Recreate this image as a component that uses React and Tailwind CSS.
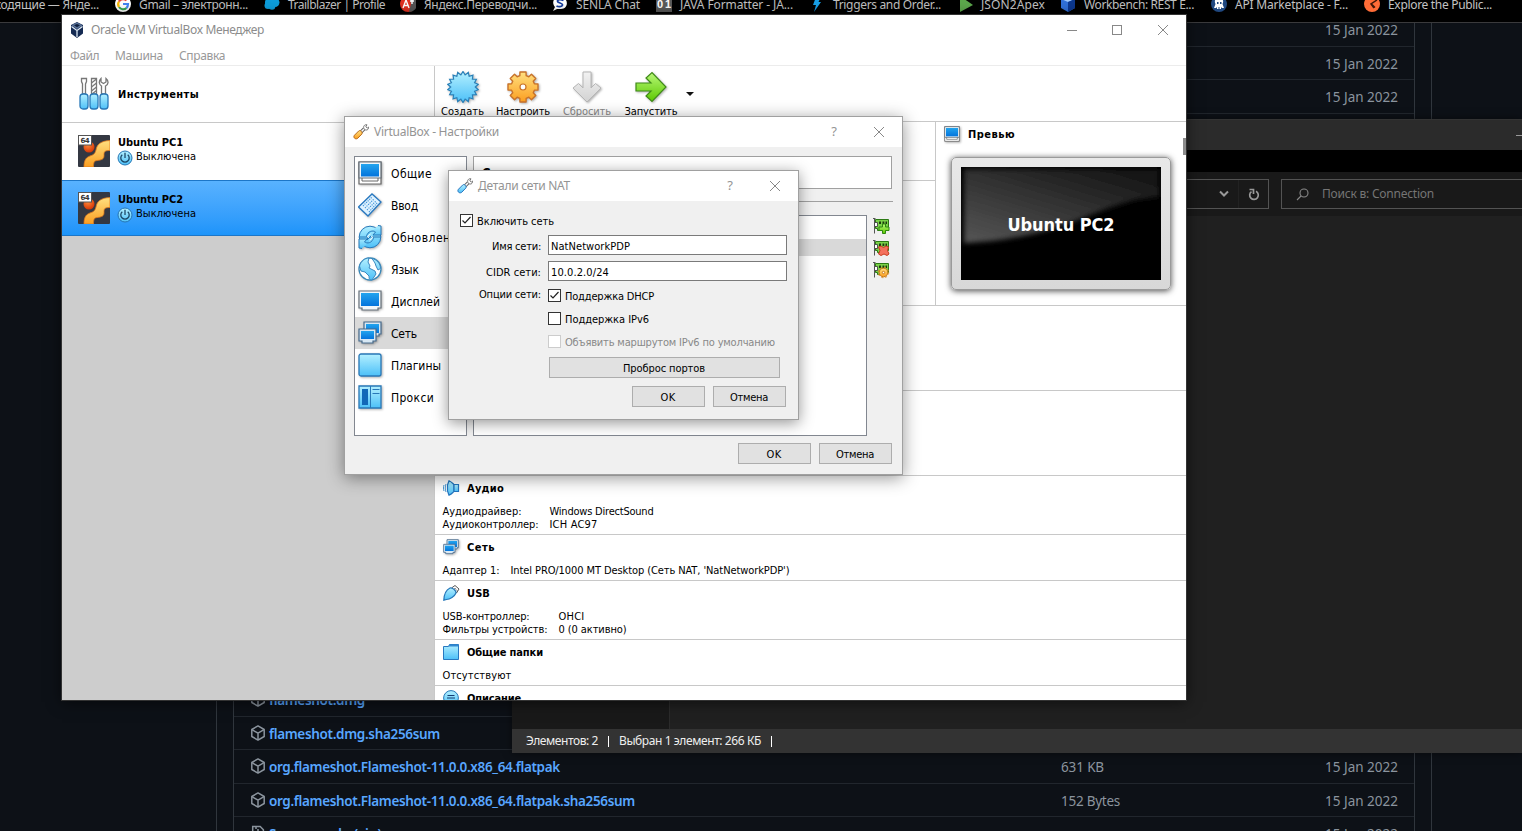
import React, { useLayoutEffect, useRef } from "react";

// Text whose tracking is adjusted so that it takes exactly `w` pixels.
function Fit({ w, className = "", children }) {
  const ref = useRef(null);
  useLayoutEffect(() => {
    const el = ref.current;
    el.style.letterSpacing = "0px";
    const natural = el.getBoundingClientRect().width;
    el.style.letterSpacing = (w - natural) / String(children).length + "px";
  }, [w, children]);
  return (
    <span ref={ref} className={"inline-block shrink-0 whitespace-pre " + className}>
      {children}
    </span>
  );
}

/* ---------- icons ---------- */

function Defs() {
  return (
    <svg className="absolute h-0 w-0" aria-hidden="true">
      <defs>
        <linearGradient id="cy" x1="0" y1="0" x2="0" y2="1">
          <stop offset="0" stopColor="#b4f0ff" />
          <stop offset="1" stopColor="#4cc0f8" />
        </linearGradient>
        <linearGradient id="bl" x1="0" y1="0" x2="0" y2="1">
          <stop offset="0" stopColor="#22a4ee" />
          <stop offset="1" stopColor="#0474dc" />
        </linearGradient>
        <linearGradient id="or" x1="0" y1="0" x2="0" y2="1">
          <stop offset="0" stopColor="#ffe080" />
          <stop offset="1" stopColor="#fb9e20" />
        </linearGradient>
        <linearGradient id="gr" x1="0" y1="0" x2="0" y2="1">
          <stop offset="0" stopColor="#b8f878" />
          <stop offset="1" stopColor="#5cc800" />
        </linearGradient>
        <linearGradient id="gy" x1="0" y1="0" x2="0" y2="1">
          <stop offset="0" stopColor="#f2f2f2" />
          <stop offset="1" stopColor="#d2d2d2" />
        </linearGradient>
        <radialGradient id="ball" cx="0.4" cy="0.3" r="0.8">
          <stop offset="0" stopColor="#ff8a3a" />
          <stop offset="1" stopColor="#d02c00" />
        </radialGradient>
      </defs>
    </svg>
  );
}

function star(n, cx, cy, r1, r2) {
  const pts = [];
  for (let i = 0; i < n * 2; i++) {
    const a = (Math.PI * i) / n - Math.PI / 2;
    const r = i % 2 ? r2 : r1;
    pts.push((cx + r * Math.cos(a)).toFixed(2) + "," + (cy + r * Math.sin(a)).toFixed(2));
  }
  return pts.join(" ");
}

function gear(cx, cy, r1, r2) {
  const pts = [];
  for (let i = 0; i < 8; i++) {
    const a = (Math.PI * i) / 4 - Math.PI / 2;
    [[-0.27, r2], [-0.2, r1], [0.2, r1], [0.27, r2]].forEach(([d, r]) =>
      pts.push((cx + r * Math.cos(a + d)).toFixed(2) + "," + (cy + r * Math.sin(a + d)).toFixed(2))
    );
  }
  return pts.join(" ");
}

const STAR = star(18, 16, 16, 15.5, 12.3);
const GEAR = gear(16, 16, 15.3, 11.8);

const shadow = "drop-shadow-[1px_1px_1px_rgba(0,0,0,0.3)]";

const NewIcon = () => (
  <svg width="32" height="32" className={shadow}>
    <polygon points={STAR} fill="url(#cy)" stroke="#2a80b8" strokeWidth="1.2" />
  </svg>
);
const GearIcon = () => (
  <svg width="32" height="32" className={shadow}>
    <polygon points={GEAR} fill="url(#or)" stroke="#c8722a" strokeWidth="1.4" strokeLinejoin="round" />
    <circle cx="16" cy="16" r="3" fill="#fff" stroke="#c8722a" strokeWidth="1.2" />
  </svg>
);
const DropIcon = () => (
  <svg width="32" height="32" className={shadow}>
    <path d="M12 1h8v16l4.500-4.500 5.500 4.500-14 14L2 17l5.500-4.500L12 17z" fill="url(#gy)" stroke="#b6b6b6" />
  </svg>
);
const StartIcon = () => (
  <svg width="32" height="32" className={shadow}>
    <path d="M1 12h15l-5-5 6-5.500L31 16 17 30.500 11 25l5-5H1z" fill="url(#gr)" stroke="#3f8a18" strokeWidth="1.2" />
  </svg>
);
const ToolsIcon = () => (
  <svg width="32" height="34" fill="none" stroke="#777" strokeWidth="1.300">
    <path d="M2.500 1.500h5v3L6.500 7v10h-3V7l-1-2.500z" fill="#fff" />
    <path d="M12.500 1.500h5V17h-5z" fill="#fff" />
    <path d="M12.500 6l5-4M12.500 10l5-4M12.500 14l5-4M13 17l4.500-3.500" />
    <path d="M22 1.500c-3 3-1.500 6.500.5 7.500v8h4V9c3-1.500 3.500-5 .5-7.500V5l-2.500 1.500L22 5z" fill="#fff" />
    <g fill="url(#cy)" stroke="#2878b8">
      <rect x="1" y="17" width="8" height="15" rx="3" />
      <rect x="11" y="17" width="8" height="15" rx="3" />
      <rect x="21" y="17" width="8" height="15" rx="3" />
    </g>
  </svg>
);
const VmIcon = () => (
  <svg width="32" height="32">
    <rect width="32" height="32" rx="1" fill="#343842" />
    <circle cx="11" cy="12" r="5.500" fill="url(#ball)" />
    <path d="M32 5.500v10c-6 0-6 1.500-6 5s-2 4.500-7 5c-3 .5-3.500 2-3.500 6.500H6c0-6 1.500-9.500 6-11 3-1 5-2 6-6 1-6 5-9 14-9.500z" fill="url(#or)" stroke="#e0781c" strokeWidth=".8" />
    <rect x=".5" y=".5" width="13" height="9.500" fill="#fff" stroke="#555" />
    <text x="2.500" y="8" fontSize="7" fontFamily="DejaVu Sans" fontWeight="bold" textLength="9" fill="#333">64</text>
  </svg>
);
const PowerIcon = () => (
  <svg width="16" height="16" fill="none">
    <circle cx="8" cy="8" r="7" fill="url(#cy)" stroke="#2676b4" />
    <path d="M5.300 4.700a4.200 4.200 0 1 0 5.400 0M8 2.800V8" stroke="#1c4868" strokeWidth="1.300" />
  </svg>
);
const VBoxIcon = () => (
  <svg width="14" height="16">
    <path d="M7 0l6 3v8.500L7 16l-6-4.500V3z" fill="#152a52" />
    <path d="M7 .5l5.500 2.700L7 7 1.500 3.200z" fill="#5a7298" />
    <path d="M1.500 4.500L7 8.500v6.500M12.500 4.500L7 8.500" stroke="#dce8f4" strokeWidth="1.300" fill="none" />
    <path d="M4 3.300L7 2l3 1.300L7 5.300z" fill="#0e1e3c" />
  </svg>
);
const WrenchIcon = ({ c, s }) => (
  <svg width="16" height="16" fill="none">
    <path d="M7.500 8.500L11 5" stroke="#666" strokeWidth="3.400" />
    <path d="M7.500 8.500L11 5" stroke="#fff" strokeWidth="1.500" />
    <path d="M11.300 5.300C9.500 2.500 11.500.3 14 .8L12.800 2.800l1.500 1.200L15.600 3c.3 2.500-2 4-4.300 2.300z" fill="#fff" stroke="#666" strokeWidth=".9" />
    <path d="M1.500 11.200l4.300-4.300c1.600-1.200 4.200 1.500 3 3.200L4.600 14.400c-2.300 1.500-4.900-1.200-3.100-3.200z" fill={c} stroke={s} />
  </svg>
);

const Monitor = ({ small, base }) => (
  <svg width={small ? 16 : 24} height={small ? 16 : 24} viewBox="0 0 24 24" className={shadow}>
    {base && <path d="M1 1h22v22H1z" fill="#fff" stroke="#666" strokeWidth="1.2" />}
    <path d={base ? "M1 1h22v16H1z" : "M1 2h22v17h-3v2H4v-2H1z"} fill="#f0f6fa" stroke="#66707a" strokeWidth="1.2" />
    <path d={base ? "M3 3h18v12.500H3z" : "M3 4h18v13H3z"} fill="url(#bl)" />
    {base && <path d="M4 17v3h16v-3" stroke="#666" fill="none" />}
  </svg>
);
const KeyIcon = () => (
  <svg width="24" height="24" className={shadow}>
    <path d="M0.500 14L14 1l9 8-13 14z" fill="#dff2ff" stroke="#2878c0" strokeWidth="1.300" />
    <path d="M5 13l9-9M7 15l9-9M9 17l9-9M11 19l8-9" stroke="#4898d8" strokeDasharray="1.200 1" strokeWidth="1.200" />
  </svg>
);
const UpdateIcon = () => (
  <svg width="24" height="24" className={shadow}>
    <circle cx="12" cy="12" r="10.800" fill="url(#cy)" stroke="#2878b8" />
    <path d="M20 0.500l3 .5v9h-8l2.500-3C15 5 9.500 6 8.500 11.500" fill="url(#cy)" stroke="#2878b8" />
    <path d="M4 23.500L1 23v-9h8l-2.500 3C9 19 14.500 18 15.500 12.500" fill="url(#cy)" stroke="#2878b8" />
    <path d="M1 12h9l-1 3 4-4-1 1h11" stroke="#2878b8" fill="none" />
    <path d="M10.500 13l-1-2 3-2M13.500 11l1 2-3 2" stroke="#fff" fill="none" />
  </svg>
);
const GlobeIcon = () => (
  <svg width="24" height="24" className={shadow}>
    <circle cx="12" cy="12" r="11" fill="#fff" stroke="#3a88b8" strokeWidth="1.300" />
    <path d="M1.500 9C3 4 7 1 11 1l-1 4 2 4-1 2 6 3 1 3-4 6c-3 0-3-2-3-4l-4-4-4-1zM14 1.500c5 1 8.500 5.500 8.500 10L20 13l-2-4-1-3z" fill="url(#cy)" stroke="#3a88c0" />
  </svg>
);
const NetIcon = ({ small }) => (
  <svg width={small ? 16 : 24} height={small ? 16 : 24} viewBox="0 0 24 24" className={shadow}>
    <path d="M6 1h17v12h-2v2H6z" fill="#d8e8f4" stroke="#466a8c" strokeWidth="1.200" />
    <path d="M8 3h13v9H8z" fill="url(#bl)" />
    <path d="M1 8h17v12h-3v2H4v-2H1z" fill="#d8e8f4" stroke="#466a8c" strokeWidth="1.200" />
    <path d="M3 10h13v8H3z" fill="url(#bl)" />
  </svg>
);
const PluginIcon = () => (
  <svg width="24" height="24" className={shadow}>
    <rect x="1" y="1" width="22" height="22" rx="2" fill="url(#cy)" stroke="#2878b8" strokeWidth="1.300" />
  </svg>
);
const ProxyIcon = () => (
  <svg width="24" height="24" className={shadow}>
    <path d="M1 1h22v22H1z" fill="url(#cy)" stroke="#2878b8" strokeWidth="1.300" />
    <path d="M12.500 1v22M14.500 4.500h7M14.500 8.500h7" stroke="#2878b8" />
    <path d="M4 4h6v16H4z" fill="#1268b8" />
  </svg>
);
const AudioIcon = () => (
  <svg width="17" height="16" fill="none">
    <path d="M4.500 5L6 .8C9 2 10 4 11 4.500v7C10 12 9 14 6 15.200L4.500 11z" fill="url(#cy)" stroke="#2476c0" strokeWidth="1.200" />
    <path d="M11 4.500h4.500v7H11z" fill="url(#cy)" stroke="#2476c0" strokeWidth="1.200" />
    <path d="M3 4c-1 2-1 6 0 8M1 5c-.8 2-.8 4 0 6" stroke="#4494d0" />
  </svg>
);
const UsbIcon = () => (
  <svg width="17" height="16">
    <path d="M8.500 3L12 .5l4 3.500-2.500 4z" fill="#fff" stroke="#555" />
    <path d="M11.500 3l1 1M13 4.500l1 1" stroke="#333" />
    <path d="M.8 15.200C1 9 4 4.500 7 3c2-.8 6.500 2.500 6 5-1.500 3.500-6 6.500-9.500 6.500z" fill="url(#cy)" stroke="#2476b8" strokeWidth="1.200" />
  </svg>
);
const FolderIcon = () => (
  <svg width="17" height="16">
    <path d="M.5 2.500h5l1-2h9v15H.5z" fill="url(#cy)" stroke="#2878c0" />
    <path d="M5.500 2.500l1-2h9v2z" fill="#3088d0" />
  </svg>
);
const DescIcon = () => (
  <svg width="17" height="16">
    <circle cx="8" cy="8" r="7.400" fill="url(#cy)" stroke="#2878b8" />
    <path d="M4.500 5.500h7M4 8h8M4.500 10.500h7" stroke="#173c70" strokeWidth="1.100" />
  </svg>
);
const NicIcon = ({ kind }) => (
  <svg width="17" height="17">
    <path d="M0 .5h2.500M1.500 1v14.500" stroke="#555" fill="none" />
    <path d="M2.500 1.500h13v9h-3v2h-8v-2h-2z" fill="#7ad048" stroke="#2c7a14" />
    <path d="M6 3.500h2v2.500H6zM9.500 3.500h1.800v2.500H9.500zM12.500 3.500h1.500v2.500h-1.500z" fill="#1c3810" />
    <path d="M1.500 4.500h3v4h-3z" fill="#fff" stroke="#444" strokeWidth=".9" />
    {kind === "add" && <path d="M9.500 6h3v3H16v3.500h-3.500v3h-3v-3H6V9h3.500z" fill="url(#gr)" stroke="#2f8810" />}
    {kind === "del" && <path d="M5.500 7L8 6l2.500 1.500L13 6l2.500 1L14.500 10.500 16 14l-2 1.500-3-1.500-3 1.500-2.500-1.500L7 10.500z" fill="#f4705c" stroke="#c83c20" />}
    {kind === "edit" && (
      <>
        <circle cx="10.500" cy="10.500" r="4.300" fill="url(#or)" stroke="#c87818" />
        <circle cx="10.500" cy="10.500" r="5.200" fill="none" stroke="#d88820" strokeDasharray="2 2.080" />
        <circle cx="10.500" cy="10.500" r="1.200" fill="#fff" stroke="#c87818" />
      </>
    )}
  </svg>
);
const Cross = ({ c = "#888" }) => (
  <svg width="12" height="12" stroke={c} fill="none">
    <path d="M1 1l10 10M11 1L1 11" />
  </svg>
);
const PackageIcon = () => (
  <svg width="16" height="16" viewBox="0 0 16 16" fill="none" stroke="#8b949e" strokeWidth="1.500" strokeLinejoin="round" className="-translate-y-px">
    <path d="M8 .9l6.200 3.600v7L8 15.100l-6.200-3.600v-7z" />
    <path d="M2 4.700l6 3.500 6-3.500M8 8.200V15" />
  </svg>
);
const ZipIcon = () => (
  <svg width="16" height="16" fill="none" stroke="#8b949e" strokeWidth="1.500" className="-translate-y-px">
    <path d="M2.700 1.500h7.500l3.200 3.200v10H2.700zM6 2v2M8 4v2M6 6v2" />
  </svg>
);

/* ---------- browser behind the windows ---------- */

const fav = {
  google: (
    <svg width="16" height="16" fill="none">
      <circle cx="8" cy="8" r="8" fill="#fff" />
      <path d="M4 11a5 5 0 0 0 7.500 1" stroke="#34a853" strokeWidth="2.200" />
      <path d="M4 5.500a5 5 0 0 0 0 5.500" stroke="#fbbc05" strokeWidth="2.200" />
      <path d="M11.500 4.500A5 5 0 0 0 4 5.500" stroke="#ea4335" strokeWidth="2.200" />
      <path d="M8 8h5c0 2-.5 3-1.500 4" stroke="#4285f4" strokeWidth="2.200" />
    </svg>
  ),
  cloud: (
    <svg width="16" height="16" fill="#0d9ddb">
      <circle cx="5" cy="6.500" r="4" /><circle cx="11" cy="6.500" r="4.500" /><circle cx="4" cy="9.500" r="3.500" /><circle cx="8" cy="10.500" r="3.300" />
    </svg>
  ),
  translate: (
    <svg width="16" height="16">
      <circle cx="8" cy="8" r="8" fill="#e03020" />
      <path d="M9 0a8 8 0 0 1 0 16l2-8z" fill="#555" />
      <path d="M3 12l3-8 3 8M4 9.500h4M10 5h4M12 4v4" stroke="#fff" strokeWidth="1.400" fill="none" />
    </svg>
  ),
  senla: (
    <svg width="16" height="16">
      <path d="M8 1c9 0 9 12 1 12H5l-4 2 2-4C-1 6 2 1 8 1z" fill="#fff" />
      <path d="M11.500 4.500c-3-1.500-6-1-6 .8S11 7 10.500 9s-4 2-6 1" stroke="#163c9c" strokeWidth="1.800" fill="none" />
    </svg>
  ),
  java: (
    <span className="flex h-4 w-4 justify-around bg-[#5a5a5a] font-['Liberation_Sans'] text-[11px] leading-4 font-bold text-white"><span>0</span><span>1</span></span>
  ),
  bolt: (
    <svg width="16" height="16">
      <path d="M7 1h5L9.500 6H12l-7 10 2-7H4z" fill="#18a0e8" />
    </svg>
  ),
  play: (
    <svg width="16" height="16">
      <path d="M3 0v16l13-7z" fill="#5ca84c" />
    </svg>
  ),
  cube: (
    <svg width="16" height="16">
      <path d="M1 3l8-3 6 3v9l-7 4-7-4z" fill="#3070d8" />
      <path d="M1 3l7 3 7-3-6-3z" fill="#a0c8f8" /><path d="M8 6l7-3v9l-7 4z" fill="#0c3890" />
    </svg>
  ),
  astro: (
    <svg width="16" height="16">
      <circle cx="8" cy="8" r="8" fill="#204880" />
      <path d="M8 2c4 0 5 3 3.500 6l1.500 4h-2l-1-1v2H8.500v-2h-1v2H6v-2l-1 1H3l1.500-4C3 5 4 2 8 2z" fill="#fff" />
      <path d="M6 6h1.500v2H6zM9 6h1.500v2H9z" fill="#204880" />
    </svg>
  ),
  postman: (
    <svg width="16" height="16">
      <circle cx="8" cy="8" r="8" fill="#ff6c37" />
      <path d="M13 4L7 8l3 4M8 8.500l3 3" stroke="#401808" strokeWidth="1.500" fill="none" />
    </svg>
  ),
};

const bookmarks = [
  ["google", "Gmail – электронн...", 109, "w-[149px]"],
  ["cloud", "Trailblazer | Profile", 97, "w-[136px]"],
  ["translate", "Яндекс.Переводчи...", 113, "w-[152px]"],
  ["senla", "SENLA Chat", 64, "w-[104px]"],
  ["java", "JAVA Formatter - JA...", 113, "w-[153px]"],
  ["bolt", "Triggers and Order...", 108, "w-[148px]"],
  ["play", "JSON2Apex", 64, "w-[103px]"],
  ["cube", "Workbench: REST E...", 110, "w-[151px]"],
  ["astro", "API Marketplace - F...", 113, "w-[153px]"],
  ["postman", "Explore the Public...", 104, "w-[140px]"],
];

function BookmarksBar() {
  return (
    <div className="h-[23px] shrink-0 overflow-hidden border-b border-[#3a3a3c] bg-black">
      <div className="-mt-1 flex h-4 items-center text-[12px] leading-4 text-[#c2c2c2]">
        <div className="flex w-[115px] shrink-0 justify-end pr-4">
          <Fit w={104} className="translate-y-px">ходящие — Янде...</Fit>
        </div>
        {bookmarks.map(([icon, label, w, box]) => (
          <div key={label} className={"flex shrink-0 items-center gap-2 " + box}>
            {fav[icon]}
            <Fit w={w} className="translate-y-px">{label}</Fit>
          </div>
        ))}
      </div>
    </div>
  );
}

function Asset({ icon, name, nameW, size, sizeW }) {
  return (
    <div className="flex h-[33.5px] shrink-0 items-center border-b border-[#21262d] pt-[2px] pr-4 pl-4 text-[13.5px] text-[#8b949e]">
      <div className="flex w-[811px] shrink-0 items-center gap-[3px] font-semibold text-[#58a6ff]">
        {icon}
        {name && <Fit w={nameW}>{name}</Fit>}
      </div>
      {size && <Fit w={sizeW}>{size}</Fit>}
      <div className="ml-auto">
        <Fit w={73}>15 Jan 2022</Fit>
      </div>
    </div>
  );
}

function ReleasePage() {
  return (
    <div className="h-[808px] overflow-hidden bg-[#0d1117] pl-[216px]">
      <div className="flex h-full w-[1216px] items-start border-x border-[#30363d] px-4">
        <div className="-mt-[10px] flex h-[860px] w-[1182px] flex-col border-x border-[#30363d]">
          <Asset />
          <Asset />
          <Asset />
          <div className="h-[569.5px] shrink-0" />
          <Asset icon={<PackageIcon />} name="flameshot.dmg" nameW={96} />
          <Asset icon={<PackageIcon />} name="flameshot.dmg.sha256sum" nameW={171} />
          <Asset icon={<PackageIcon />} name="org.flameshot.Flameshot-11.0.0.x86_64.flatpak" nameW={291} size="631 KB" sizeW={43} />
          <Asset icon={<PackageIcon />} name="org.flameshot.Flameshot-11.0.0.x86_64.flatpak.sha256sum" nameW={366} size="152 Bytes" sizeW={59} />
          <Asset icon={<ZipIcon />} name="Source code (zip)" nameW={113} />
        </div>
      </div>
    </div>
  );
}

/* ---------- file explorer ---------- */

function Explorer() {
  return (
    <div className="absolute top-[119px] left-[512px] flex h-[634px] w-[1010px] flex-col overflow-hidden bg-[#202020] text-[12px] shadow-[0_0_8px_rgba(0,0,0,0.5)]">
      <div className="flex h-[31px] shrink-0 items-center justify-end border-t border-[#333] bg-[#2b2b2b]">
        <div className="h-px w-[6px] bg-[#999]" />
      </div>
      <div className="h-[22px] shrink-0 bg-black" />
      <div className="flex h-[44px] shrink-0 items-center justify-end gap-3 bg-[#191919]">
        <div className="flex h-[30px] w-[600px] items-center justify-end border border-[#535353]">
          <svg width="12" height="8" fill="none" stroke="#999" strokeWidth="2"><path d="M2 1.500l4 4 4-4" /></svg>
          <div className="ml-[8px] h-full w-px bg-[#222]" />
          <svg width="12" height="13" className="mr-[8px] ml-[9px]" fill="none" stroke="#999" strokeWidth="1.700">
            <path d="M8 3.300a4.300 4.300 0 1 1-4.500.3M1.500 1.500h4v4.500" />
          </svg>
        </div>
        <div className="flex h-[30px] w-[241px] items-center border-y border-l border-[#535353] pl-[14px] text-[12px] text-[#757575]">
          <svg width="13" height="13" fill="none" stroke="#888" strokeWidth="1.100">
            <circle cx="8" cy="5" r="4" /><path d="M5 8L1 12" />
          </svg>
          <div className="ml-[13px]"><Fit w={112}>Поиск в: Connection</Fit></div>
        </div>
      </div>
      <div className="flex min-h-0 flex-1">
        <div className="w-[158px] border-r border-[#2b2b2b] bg-[#191919]" />
      </div>
      <div className="flex h-6 shrink-0 items-center bg-[#333] pl-[14px] text-[12px] text-[#eee]">
        <Fit w={72}>Элементов: 2</Fit>
        <div className="mr-[10px] ml-[10px] h-[11px] w-px bg-white" />
        <Fit w={142}>Выбран 1 элемент: 266 КБ</Fit>
        <div className="ml-[10px] h-[11px] w-px bg-white" />
      </div>
    </div>
  );
}

/* ---------- VirtualBox manager ---------- */

const tahoma = "font-['DejaVu_Sans_Condensed','DejaVu_Sans',sans-serif]";
const tahomaBold = "font-['DejaVu_Sans_Condensed','DejaVu_Sans',sans-serif] font-bold";

function Machine({ name, selected }) {
  return (
    <div
      className={
        "flex shrink-0 items-start border-y pt-[11px] pl-4 " +
        (selected ? "h-[56px] border-[#1c76c8] bg-linear-to-b from-[#58b2ff] to-[#1c94fa]" : "h-[57px] border-transparent bg-white")
      }
    >
      <VmIcon />
      <div className={"ml-2 flex flex-col items-start text-[11px] text-black " + tahoma}>
        <Fit w={65} className="leading-[15px] font-bold">{name}</Fit>
        <div className="-ml-px flex h-[15px] items-center gap-[3px]">
          <PowerIcon />
          <Fit w={60}>Выключена</Fit>
        </div>
      </div>
    </div>
  );
}

function ToolButton({ icon, label, w, box, muted }) {
  return (
    <div className={"flex shrink-0 flex-col items-center " + box}>
      {icon}
      <Fit w={w} className={"mt-[2px] text-[11px] leading-[14px] " + (muted ? "text-[#888]" : "text-black")}>{label}</Fit>
    </div>
  );
}

function Section({ icon, title, titleW, rows, labelBox }) {
  return (
    <div className="shrink-0 border-b border-[#c8c8c8] pb-[3px] pl-[7.5px]">
      <div className={"flex h-6 items-center text-[11px] " + tahomaBold}>
        <div className="w-[24.5px]">{icon}</div>
        <Fit w={titleW} className="translate-y-px">{title}</Fit>
      </div>
      <div className="pt-[5px] text-[11px] leading-[13px]">
        {rows.map(([a, aw, b, bw]) => (
          <div key={a} className="flex h-[13px]">
            <div className={labelBox}><Fit w={aw}>{a}</Fit></div>
            {b && <Fit w={bw}>{b}</Fit>}
          </div>
        ))}
      </div>
    </div>
  );
}

function Preview() {
  return (
    <div className="w-[251px] shrink-0 border-l border-[#c8c8c8] pl-[7px]">
      <div className={"flex h-6 items-center gap-2 pl-px text-[11px] " + tahomaBold}>
        <Monitor small base />
        <Fit w={47} className="translate-y-px">Превью</Fit>
      </div>
      <div className="mt-[11px] ml-2 h-[133px] w-[220px] rounded-[5px] border border-[#9a9a9a] bg-linear-to-b from-[#e8e8e8] to-[#d8d8d8] p-[9px] shadow-[0_1px_6px_rgba(0,0,0,0.7)]">
        <div className="grid h-[113px] w-[200px] place-items-center overflow-hidden bg-black">
          <svg width="200" height="113" className="col-start-1 row-start-1">
            <defs>
              <linearGradient id="gl" x1="0.8" y1="0" x2="0" y2="1">
                <stop offset="0" stopColor="#161616" />
                <stop offset="1" stopColor="#565656" />
              </linearGradient>
              <filter id="soft"><feGaussianBlur stdDeviation="2.500" /></filter>
            </defs>
            <path d="M3 2H198V30C140 32 110 72 3 76z" fill="url(#gl)" filter="url(#soft)" />
          </svg>
          <div className="col-start-1 row-start-1 translate-y-px text-[18px] font-bold text-white">
            <Fit w={107}>Ubuntu PC2</Fit>
          </div>
        </div>
      </div>
    </div>
  );
}

function Manager() {
  return (
    <div className="absolute top-[15px] left-[62px] flex h-[685px] w-[1124px] flex-col overflow-hidden bg-white shadow-[0_0_0_1px_#333,0_2px_14px_rgba(0,0,0,0.6)]">
      <div className="flex h-[30px] shrink-0 items-center pr-[17px] pl-2 text-[12px] text-[#8c8c8c]">
        <VBoxIcon />
        <div className="ml-[7px]"><Fit w={173}>Oracle VM VirtualBox Менеджер</Fit></div>
        <div className="ml-auto flex items-center">
          <div className="mr-[35px] h-px w-[10px] bg-[#888]" />
          <div className="mr-[35px] h-[10px] w-[10px] border border-[#888]" />
          <Cross />
        </div>
      </div>
      <div className="flex h-[21px] shrink-0 items-center gap-4 border-b border-[#ececec] pt-[2px] pl-2 text-[12px] text-[#999]">
        <Fit w={29}>Файл</Fit>
        <Fit w={48}>Машина</Fit>
        <Fit w={46}>Справка</Fit>
      </div>
      <div className={"flex min-h-0 flex-1 " + tahoma}>
        <div className="flex w-[373px] shrink-0 flex-col border-r border-[#c8c8c8] bg-[#cdcdcd]">
          <div className="flex h-[57px] shrink-0 items-center gap-[7px] border-b border-[#c8c8c8] bg-white pl-[17px] text-[11px] font-bold">
            <ToolsIcon />
            <Fit w={81} className="translate-y-px">Инструменты</Fit>
          </div>
          <Machine name="Ubuntu PC1" />
          <Machine name="Ubuntu PC2" selected />
        </div>
        <div className="flex min-w-0 flex-1 flex-col">
          <div className="flex h-[56px] shrink-0 border-b border-[#c8c8c8] pt-[5px]">
            <ToolButton icon={<NewIcon />} label="Создать" w={43} box="w-[55px]" />
            <ToolButton icon={<GearIcon />} label="Настроить" w={54} box="w-[66px]" />
            <ToolButton icon={<DropIcon />} label="Сбросить" w={48} box="w-[62px]" muted />
            <ToolButton icon={<StartIcon />} label="Запустить" w={53} box="w-[66px]" />
            <svg width="8" height="5" className="mt-[21px] ml-[2px]"><path d="M0 0h8L4 4z" fill="#111" /></svg>
          </div>
          <div className="flex h-[184px] shrink-0 border-b border-[#c8c8c8]">
            <div className="flex-1">
              <div className="h-[59px] border-b border-[#c8c8c8]" />
            </div>
            <Preview />
          </div>
          <div className="h-[85px] shrink-0 border-b border-[#c8c8c8]" />
          <div className="h-[85px] shrink-0 border-b border-[#c8c8c8]" />
          <Section icon={<AudioIcon />} title="Аудио" titleW={37} labelBox="w-[107px]" rows={[["Аудиодрайвер:", 79, "Windows DirectSound", 104], ["Аудиоконтроллер:", 96, "ICH AC97", 48]]} />
          <Section icon={<NetIcon small />} title="Сеть" titleW={28} labelBox="w-[68px]" rows={[["Адаптер 1:", 57, "Intel PRO/1000 MT Desktop (Сеть NAT, 'NatNetworkPDP')", 279]]} />
          <Section icon={<UsbIcon />} title="USB" titleW={23} labelBox="w-[116px]" rows={[["USB-контроллер:", 87, "OHCI", 26], ["Фильтры устройств:", 105, "0 (0 активно)", 68]]} />
          <Section icon={<FolderIcon />} title="Общие папки" titleW={76} labelBox="w-[107px]" rows={[["Отсутствуют", 69]]} />
          <Section icon={<DescIcon />} title="Описание" titleW={54} labelBox="w-[107px]" rows={[]} />
        </div>
      </div>
      <div className="absolute top-[123px] right-0 h-[17px] w-[3px] bg-[#8c8c8c]" />
    </div>
  );
}

/* ---------- dialogs ---------- */

function DialogTitle({ icon, title, w }) {
  return (
    <div className="flex h-[30px] shrink-0 items-center bg-white pr-[17px] pl-2 text-[12px] text-[#949494]">
      {icon}
      <div className="ml-[5px]"><Fit w={w}>{title}</Fit></div>
      <div className="mr-[36px] ml-auto text-[13px]">?</div>
      <Cross />
    </div>
  );
}

function Button({ children, w, box }) {
  return (
    <div className={"flex h-[21px] shrink-0 items-center justify-center border border-[#adadad] bg-[#e1e1e1] pt-[2px] pr-px text-[11px] leading-[13px] " + tahoma + " " + box}>
      <Fit w={w}>{children}</Fit>
    </div>
  );
}

const categories = [
  [<Monitor base />, "Общие", 41],
  [<KeyIcon />, "Ввод", 27],
  [<UpdateIcon />, "Обновления", 74],
  [<GlobeIcon />, "Язык", 28],
  [<Monitor />, "Дисплей", 49],
  [<NetIcon />, "Сеть", 26],
  [<PluginIcon />, "Плагины", 50],
  [<ProxyIcon />, "Прокси", 43],
];

function SettingsDialog() {
  return (
    <div className="absolute top-[116px] left-[344px] flex h-[359px] w-[559px] flex-col border border-[#a0a0a0] bg-[#f0f0f0] shadow-[0_3px_16px_rgba(0,0,0,0.42)]">
      <DialogTitle icon={<WrenchIcon c="url(#or)" s="#b86818" />} title="VirtualBox - Настройки" w={125} />
      <div className="flex h-[289px] shrink-0 gap-[6px] pt-[9px] pl-[9px]">
        <div className="h-[280px] w-[113px] overflow-hidden border border-[#828790] bg-white">
          {categories.map(([icon, label, w]) => (
            <div key={label} className={"flex h-8 items-center gap-[9px] pl-[3px] text-[12px] text-black " + tahoma + (label === "Сеть" ? " bg-[#d9d9d9]" : "")}>
              {icon}
              <Fit w={w} className="translate-y-px">{label}</Fit>
            </div>
          ))}
        </div>
        <div className="flex w-[420px] flex-col">
          <div className={"h-[33px] w-[419px] border border-[#a0a0a0] bg-white pt-2 pl-2 text-[13px] leading-4 font-bold " + tahoma}>Сеть</div>
          <div className="mt-3 h-px bg-[#a0a0a0]" />
          <div className="mt-[13px] flex gap-[6px]">
            <div className="h-[221px] w-[394px] border border-[#828790] bg-white pt-[23px]">
              <div className="h-[17px] bg-[#d9d9d9]" />
            </div>
            <div className="flex flex-col gap-[5px] pt-[3px]">
              <NicIcon kind="add" />
              <NicIcon kind="del" />
              <NicIcon kind="edit" />
            </div>
          </div>
        </div>
      </div>
      <div className="mt-[7px] flex justify-end gap-2 pr-[10px]">
        <Button w={15} box="w-[73px]">OK</Button>
        <Button w={38} box="w-[73px]">Отмена</Button>
      </div>
    </div>
  );
}

function Check({ on, disabled, label, w }) {
  return (
    <div className="flex items-center gap-1 text-[11px]">
      <div className={"h-[13px] w-[13px] border bg-white " + (disabled ? "border-[#ccc]" : "border-[#333]")}>
        {on && (
          <svg width="11" height="11" fill="none" stroke="#222" strokeWidth="1.200"><path d="M1.500 5.500L4 8l5.500-6" /></svg>
        )}
      </div>
      <Fit w={w} className={"translate-y-px " + (disabled ? "text-[#888]" : "text-black")}>{label}</Fit>
    </div>
  );
}

function Field({ label, w, value, vw }) {
  return (
    <div className="flex h-5 items-center">
      <div className="flex w-[92px] justify-end"><Fit w={w} className="translate-y-px">{label}</Fit></div>
      <div className="ml-[7px] flex h-5 w-[239px] items-center border border-[#7a7a7a] bg-white pl-[2px]">
        <Fit w={vw} className="translate-y-px">{value}</Fit>
      </div>
    </div>
  );
}

function NatDialog() {
  return (
    <div className="absolute top-[170px] left-[448px] flex h-[250px] w-[351px] flex-col border border-[#a0a0a0] bg-[#f0f0f0] shadow-[0_3px_14px_rgba(0,0,0,0.42)]">
      <DialogTitle icon={<WrenchIcon c="url(#cy)" s="#2876c0" />} title="Детали сети NAT" w={92} />
      <div className={"flex flex-col text-[11px] leading-[13px] text-black " + tahoma}>
        <div className="mt-[13px] ml-[11px]"><Check on label="Включить сеть" w={77} /></div>
        <div className="mt-2 flex flex-col gap-[6px]">
          <Field label="Имя сети:" w={49} value="NatNetworkPDP" vw={79} />
          <Field label="CIDR сети:" w={55} value="10.0.2.0/24" vw={58} />
        </div>
        <div className="mt-2 flex">
          <div className="-mt-[1px] flex w-[92px] justify-end"><Fit w={62}>Опции сети:</Fit></div>
          <div className="ml-[7px] flex flex-col gap-[10px]">
            <Check on label="Поддержка DHCP" w={89} />
            <Check label="Поддержка IPv6" w={84} />
            <Check disabled label="Объявить маршрутом IPv6 по умолчанию" w={210} />
          </div>
        </div>
        <div className="mt-[9px] ml-[100px]"><Button w={82} box="w-[231px]">Проброс портов</Button></div>
        <div className="mt-2 flex justify-end gap-2 pr-3">
          <Button w={15} box="w-[73px]">OK</Button>
          <Button w={38} box="w-[73px]">Отмена</Button>
        </div>
      </div>
    </div>
  );
}

export default function App() {
  return (
    <div className="relative flex h-[831px] w-[1522px] flex-col overflow-hidden bg-[#0d1117] font-['Noto_Sans','Open_Sans',sans-serif]">
      <Defs />
      <BookmarksBar />
      <ReleasePage />
      <Explorer />
      <Manager />
      <SettingsDialog />
      <NatDialog />
    </div>
  );
}
